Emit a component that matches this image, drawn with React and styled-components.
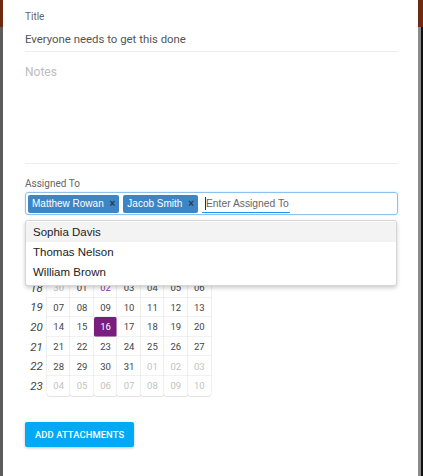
import React from "react";
import styled, { createGlobalStyle } from "styled-components";

const GlobalStyle = createGlobalStyle`
	html, body {
		margin: 0;
		padding: 0;
		height: 100%;
		background: #6a6a6a;
	}
	#root {
		height: 100%;
	}
`;

const weeks = [
	{ n: 18, days: [["30", "out"], ["01"], ["02", "today"], ["03"], ["04"], ["05"], ["06"]] },
	{ n: 19, days: [["07"], ["08"], ["09"], ["10"], ["11"], ["12"], ["13"]] },
	{ n: 20, days: [["14"], ["15"], ["16", "selected"], ["17"], ["18"], ["19"], ["20"]] },
	{ n: 21, days: [["21"], ["22"], ["23"], ["24"], ["25"], ["26"], ["27"]] },
	{ n: 22, days: [["28"], ["29"], ["30"], ["31"], ["01", "out"], ["02", "out"], ["03", "out"]] },
	{ n: 23, days: [["04", "out"], ["05", "out"], ["06", "out"], ["07", "out"], ["08", "out"], ["09", "out"], ["10", "out"]] },
];

const people = ["Sophia Davis", "Thomas Nelson", "William Brown"];

function App() {
	return (
		<>
			<GlobalStyle />
			<Screen>
				<Strip $side="left" />
				<Dialog>
					<Field>
						<Label>Title</Label>
						<TitleValue>Everyone needs to get this done</TitleValue>
					</Field>

					<NotesField>
						<Placeholder>Notes</Placeholder>
					</NotesField>

					<Label>Assigned To</Label>
					<Picker>
						<TagBox>
							<Chip>
								Matthew Rowan <Remove>×</Remove>
							</Chip>
							<Chip>
								Jacob Smith <Remove>×</Remove>
							</Chip>
							<TagInput>
								<Caret />
								Enter Assigned To
							</TagInput>
						</TagBox>

						<Menu>
							{people.map((p, i) => (
								<MenuItem key={p} $active={i === 0}>
									{p}
								</MenuItem>
							))}
						</Menu>

						{/* month header + weekday row sit under the open menu */}
						<Calendar>
							<CalTop />
							<Grid>
								{weeks.map((w) => (
									<React.Fragment key={w.n}>
										<WeekNo>{w.n}</WeekNo>
										{w.days.map(([d, kind], i) => (
											<Day key={i} $kind={kind} $last={w.n === 23}>
												{d}
											</Day>
										))}
									</React.Fragment>
								))}
							</Grid>
						</Calendar>
					</Picker>

					<Button>Add Attachments</Button>
				</Dialog>
				<Strip $side="right" />
			</Screen>
		</>
	);
}

const Screen = styled.div`
	display: flex;
	height: 476px;
	width: 423px;
	overflow: hidden;
`;

const Strip = styled.div`
	width: ${(p) => (p.$side === "left" ? "3px" : "5px")};
	flex-shrink: 0;
	background: ${(p) =>
		p.$side === "left"
			? "linear-gradient(#6e2a10 0, #6e2a10 27px, #5c5c5c 27px)"
			: "linear-gradient(to right, #8a8a8a 0, #8a8a8a 3px, #111 3px)"};
	${(p) =>
		p.$side === "right" &&
		`
		box-shadow: inset 0 27px 0 0 #6e2a10;
	`}
`;

const Dialog = styled.div`
	flex: 1;
	background: #fff;
	padding: 11px 20px 0 22px;
	display: flex;
	flex-direction: column;
	align-items: flex-start;
	font-family: Roboto, "Liberation Sans", sans-serif;
`;

const Field = styled.div`
	align-self: stretch;
	border-bottom: 1.5px solid #ececec;
	padding-bottom: 4px;
`;

const Label = styled.div`
	font-size: 10px;
	color: #666;
	line-height: 12px;
`;

const TitleValue = styled.div`
	margin-top: 8px;
	font-size: 11.4px;
	color: #555;
	line-height: 16px;
`;

const NotesField = styled.div`
	align-self: stretch;
	height: 112px;
	border-bottom: 1.5px solid #ececec;
	padding-top: 13px;
	box-sizing: border-box;
	margin-bottom: 14px;
`;

const Placeholder = styled.div`
	font-size: 12px;
	color: #bdbdbd;
`;

const Picker = styled.div`
	position: relative;
	align-self: stretch;
	margin-top: 2px;
`;

const TagBox = styled.div`
	display: flex;
	align-items: center;
	gap: 4px;
	height: 23px;
	box-sizing: border-box;
	border: 1px solid #8fc1ee;
	border-radius: 3px;
	padding: 0 2px;
	font-family: "Liberation Sans", Arial, sans-serif;
	box-shadow: 0 0 2px rgba(102, 175, 233, 0.4);
`;

const Chip = styled.div`
	display: flex;
	align-items: center;
	height: 18px;
	padding: 0 4px;
	background: #3d86c6;
	color: #fff;
	font-size: 10px;
	border-radius: 2px;
	white-space: pre;
`;

const Remove = styled.span`
	color: #2b3a48;
	font-weight: bold;
	font-size: 10px;
	margin-left: 3px;
`;

const TagInput = styled.div`
	position: relative;
	font-size: 10.3px;
	color: #666;
	padding: 0 1px 1px 4px;
	border-bottom: 1.5px solid #2196f3;
	line-height: 15px;
	margin-top: 2px;
`;

const Caret = styled.span`
	position: absolute;
	left: 3px;
	top: 1px;
	width: 1px;
	height: 13px;
	background: #333;
`;

const Menu = styled.div`
	position: absolute;
	top: 28px;
	left: 0;
	right: 1px;
	z-index: 2;
	background: #fff;
	border: 1px solid #d6d6d6;
	border-radius: 3px;
	box-shadow: 0 2px 4px rgba(0, 0, 0, 0.2);
	padding: 1px 0 3px;
	font-family: "Liberation Sans", Arial, sans-serif;
`;

const MenuItem = styled.div`
	font-size: 11.5px;
	color: #222;
	height: 20px;
	line-height: 21px;
	padding-left: 7px;
	background: ${(p) => (p.$active ? "#f3f3f3" : "transparent")};
`;

const Calendar = styled.div`
	margin-top: 6px;
	width: 187px;
`;

const CalTop = styled.div`
	height: 57px;
`;

const Grid = styled.div`
	display: grid;
	grid-template-columns: 22px repeat(7, 23.43px);
	grid-auto-rows: 19.6px;
`;

const WeekNo = styled.div`
	font-size: 11.5px;
	font-style: italic;
	color: #444;
	display: flex;
	align-items: center;
	justify-content: center;
	padding-left: 1px;
`;

const dayColor = (k) =>
	k === "selected" ? "#fff" : k === "out" ? "#c2c2c2" : k === "today" ? "#8e35a3" : "#444";

const Day = styled.div`
	font-size: 9.5px;
	display: flex;
	align-items: center;
	justify-content: center;
	color: ${(p) => dayColor(p.$kind)};
	background: ${(p) => (p.$kind === "selected" ? "#7a1d7e" : "#fff")};
	border-radius: ${(p) => (p.$kind === "selected" ? "2px" : p.$last ? "0 0 3px 3px" : "0")};
	box-shadow: 0 0 0 0.5px #e4e4e4, 0 1px 1px rgba(0, 0, 0, 0.12);
`;

const Button = styled.button`
	margin-top: 26px;
	height: 25px;
	padding: 0 10px;
	border: none;
	border-radius: 2px;
	background: #03a9f4;
	color: #fff;
	font-family: Roboto, sans-serif;
	font-weight: 500;
	font-size: 9.4px;
	text-transform: uppercase;
	letter-spacing: 0.1px;
	box-shadow: 0 1px 3px rgba(0, 0, 0, 0.25);
`;

export default App;
